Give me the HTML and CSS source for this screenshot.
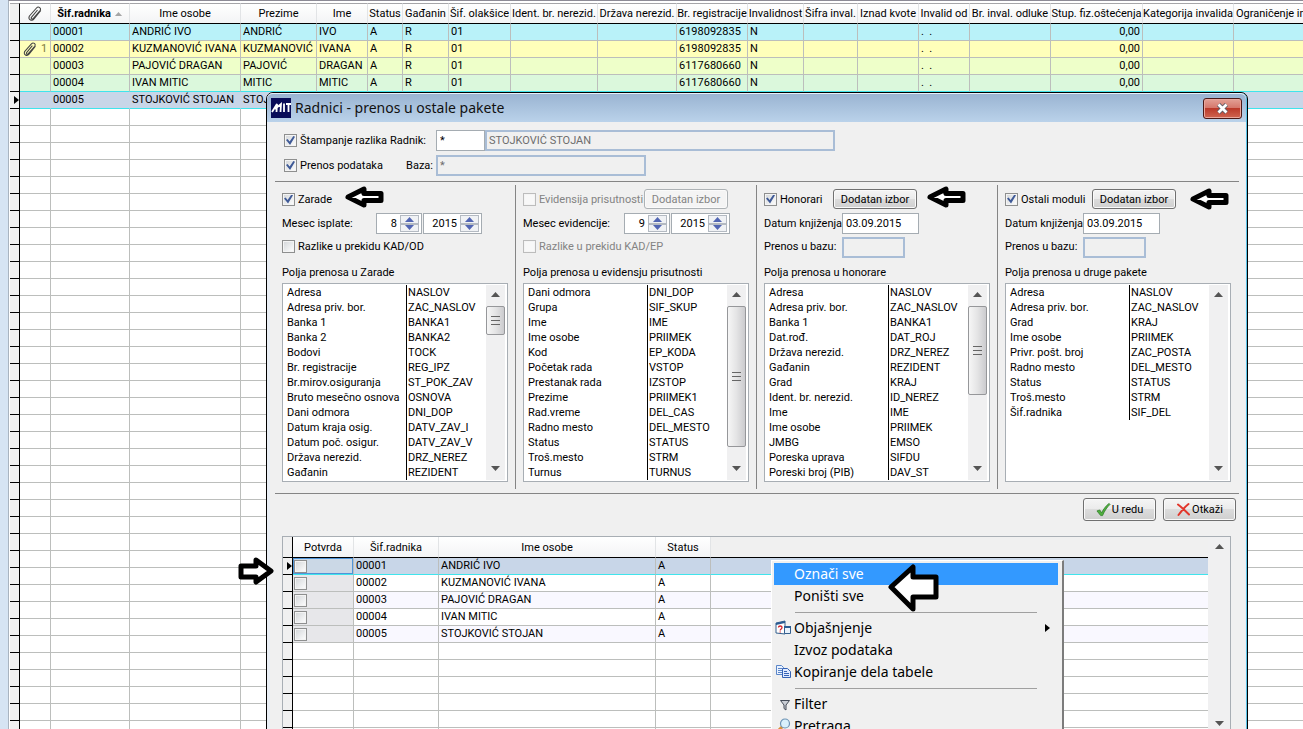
FILE: index.html
```html
<!DOCTYPE html>
<html lang="sr-Latn">
<head>
<meta charset="utf-8">
<title>Radnici - prenos u ostale pakete</title>
<link rel="stylesheet" href="styles.css">
</head>
<body>
<svg class="defs" aria-hidden="true">
  <symbol id="clip" viewBox="0 0 16 17"><path d="M2 11.500L9.500 3c2-2.200 5.300.2 3.500 2.600L6.200 13.500c-1 1.200-2.700 0-1.800-1.200L10.500 5M13.800 5.500L7 14c-2.200 2.700-6.500.5-4.600-2.800" fill="none" stroke="#444" stroke-width="1.100"/></symbol>
  <symbol id="up" viewBox="0 0 9 5"><path d="M0 5L4.500 0 9 5z" fill="#555"/></symbol>
  <symbol id="down" viewBox="0 0 9 5"><path d="M0 0h9L4.500 5z" fill="#555"/></symbol>
  <symbol id="arrow" viewBox="0 0 40 24"><path d="M4 12L20 4v4.500h17v7H20V20z" fill="#fff" stroke="#000" stroke-width="5" stroke-linejoin="round"/></symbol>
  <symbol id="pointer" viewBox="0 0 5 8"><path d="M0 0l5 4-5 4z" fill="#000"/></symbol>
</svg>

<main class="main-window">
  <table class="grid staff">
    <colgroup>
      <col class="c-gut"><col class="c-clip"><col class="c-id"><col class="c-name"><col class="c-last"><col class="c-first"><col class="c-status"><col class="c-cit"><col class="c-relief"><col class="c-ident"><col class="c-country"><col class="c-reg"><col class="c-inv"><col class="c-invcode"><col class="c-over"><col class="c-from"><col class="c-dec"><col class="c-deg"><col class="c-cat"><col>
    </colgroup>
    <thead><tr>
      <th class="gutter"></th><th><svg class="clip"><use href="#clip"/></svg></th><th class="sorted">Šif.radnika <svg class="sort"><use href="#up"/></svg></th><th>Ime osobe</th><th>Prezime</th><th>Ime</th><th>Status</th><th>Gađanin</th><th>Šif. olakšice</th><th>Ident. br. nerezid.</th><th>Država nerezid.</th><th>Br. registracije</th><th>Invalidnost</th><th>Šifra inval.</th><th>Iznad kvote</th><th>Invalid od</th><th>Br. inval. odluke</th><th>Stup. fiz.oštećenja</th><th>Kategorija invalida</th><th class="open">Ograničenje in</th>
    </tr></thead>
    <tbody>
      <tr class="cyan"><td class="gutter"></td><td></td><td>00001</td><td>ANDRIĆ IVO</td><td>ANDRIĆ</td><td>IVO</td><td>A</td><td>R</td><td>01</td><td></td><td></td><td>6198092835</td><td>N</td><td></td><td></td><td>. &nbsp;.</td><td></td><td class="num">0,00</td><td></td><td></td></tr>
      <tr class="yellow"><td class="gutter"></td><td class="attach"><div><svg class="clip"><use href="#clip"/></svg>1</div></td><td>00002</td><td>KUZMANOVIĆ IVANA</td><td>KUZMANOVIĆ</td><td>IVANA</td><td>A</td><td>R</td><td>01</td><td></td><td></td><td>6198092835</td><td>N</td><td></td><td></td><td>. &nbsp;.</td><td></td><td class="num">0,00</td><td></td><td></td></tr>
      <tr class="lime"><td class="gutter"></td><td></td><td>00003</td><td>PAJOVIĆ DRAGAN</td><td>PAJOVIĆ</td><td>DRAGAN</td><td>A</td><td>R</td><td>01</td><td></td><td></td><td>6117680660</td><td>N</td><td></td><td></td><td>. &nbsp;.</td><td></td><td class="num">0,00</td><td></td><td></td></tr>
      <tr class="green before-current"><td class="gutter"></td><td></td><td>00004</td><td>IVAN MITIC</td><td>MITIC</td><td>MITIC</td><td>A</td><td>R</td><td>01</td><td></td><td></td><td>6117680660</td><td>N</td><td></td><td></td><td>. &nbsp;.</td><td></td><td class="num">0,00</td><td></td><td></td></tr>
      <tr class="current"><td class="gutter"><svg class="pointer"><use href="#pointer"/></svg></td><td></td><td>00005</td><td>STOJKOVIĆ STOJAN</td><td>STOJ</td><td></td><td></td><td></td><td></td><td></td><td></td><td></td><td></td><td></td><td></td><td></td><td></td><td></td><td></td><td></td></tr>
      <tr class="blank"><td class="gutter"></td><td></td><td></td><td></td><td></td><td></td><td></td><td></td><td></td><td></td><td></td><td></td><td></td><td></td><td></td><td></td><td></td><td></td><td></td><td></td></tr>
    </tbody>
  </table>
</main>

<section class="dialog" role="dialog" aria-labelledby="dlg-title">
  <header class="titlebar">
    <svg class="logo" viewBox="0 0 20 20"><path d="M0 0h20v20H0z" fill="#090c58"/><path d="M1 14L6 6l-.5 8M4 11l6-5-.5 8M13 5.500v8.500M15 6h5M17.500 6v8" fill="none" stroke="#fff" stroke-width="1.800"/></svg>
    <h1 id="dlg-title">Radnici - prenos u ostale pakete</h1>
    <button class="close" aria-label="Zatvori"><svg viewBox="0 0 13 11"><path d="M2.500 1.500l8 8M10.500 1.500l-8 8" stroke="#5b5b66" stroke-width="4.500"/><path d="M2.500 1.500l8 8M10.500 1.500l-8 8" stroke="#fff" stroke-width="2.800"/></svg></button>
  </header>
  <div class="client">
    <div class="top-form">
      <label class="check"><input type="checkbox" checked>Štampanje razlika</label>
      <label for="radnik">Radnik:</label>
      <input id="radnik" class="field" value="*">
      <input class="field readonly" value="STOJKOVIĆ STOJAN" aria-label="Ime radnika" readonly>
      <label class="check"><input type="checkbox" checked>Prenos podataka</label>
      <label for="baza" class="end">Baza:</label>
      <input id="baza" class="field readonly base" value="*" readonly>
    </div>

    <div class="modules">
      <section class="module">
        <div class="row first"><label class="check"><input type="checkbox" checked>Zarade</label></div>
        <div class="row second">
          <label class="w-pay" for="m1">Mesec isplate:</label>
          <span class="spin"><input id="m1" value="8"><span class="steps"><button aria-label="Više"><svg><use href="#up"/></svg></button><button aria-label="Manje"><svg><use href="#down"/></svg></button></span></span>
          <span class="spin year"><input value="2015" aria-label="Godina isplate"><span class="steps"><button aria-label="Više"><svg><use href="#up"/></svg></button><button aria-label="Manje"><svg><use href="#down"/></svg></button></span></span>
        </div>
        <div class="row third"><label class="check"><input type="checkbox">Razlike u prekidu KAD/OD</label></div>
        <h2>Polja prenosa u Zarade</h2>
        <div class="listbox">
          <div class="rows"><table>
            <tr><td>Adresa</td><td>NASLOV</td></tr><tr><td>Adresa priv. bor.</td><td>ZAC_NASLOV</td></tr><tr><td>Banka 1</td><td>BANKA1</td></tr><tr><td>Banka 2</td><td>BANKA2</td></tr><tr><td>Bodovi</td><td>TOCK</td></tr><tr><td>Br. registracije</td><td>REG_IPZ</td></tr><tr><td>Br.mirov.osiguranja</td><td>ST_POK_ZAV</td></tr><tr><td>Bruto mesečno osnova</td><td>OSNOVA</td></tr><tr><td>Dani odmora</td><td>DNI_DOP</td></tr><tr><td>Datum kraja osig.</td><td>DATV_ZAV_I</td></tr><tr><td>Datum poč. osigur.</td><td>DATV_ZAV_V</td></tr><tr><td>Država nerezid.</td><td>DRZ_NEREZ</td></tr><tr><td>Gađanin</td><td>REZIDENT</td></tr>
          </table></div>
          <div class="scroll"><svg><use href="#up"/></svg><span class="thumb short"></span><svg class="last"><use href="#down"/></svg></div>
        </div>
      </section>

      <section class="module">
        <div class="row first"><label class="check off w-att"><input type="checkbox" disabled>Evidensija prisutnosti</label><button class="btn" disabled>Dodatan izbor</button></div>
        <div class="row second">
          <label class="w-evid" for="m2">Mesec evidencije:</label>
          <span class="spin"><input id="m2" value="9"><span class="steps"><button aria-label="Više"><svg><use href="#up"/></svg></button><button aria-label="Manje"><svg><use href="#down"/></svg></button></span></span>
          <span class="spin year"><input value="2015" aria-label="Godina evidencije"><span class="steps"><button aria-label="Više"><svg><use href="#up"/></svg></button><button aria-label="Manje"><svg><use href="#down"/></svg></button></span></span>
        </div>
        <div class="row third"><label class="check off"><input type="checkbox" disabled>Razlike u prekidu KAD/EP</label></div>
        <h2>Polja prenosa u evidensju prisutnosti</h2>
        <div class="listbox">
          <div class="rows"><table>
            <tr><td>Dani odmora</td><td>DNI_DOP</td></tr><tr><td>Grupa</td><td>SIF_SKUP</td></tr><tr><td>Ime</td><td>IME</td></tr><tr><td>Ime osobe</td><td>PRIIMEK</td></tr><tr><td>Kod</td><td>EP_KODA</td></tr><tr><td>Početak rada</td><td>VSTOP</td></tr><tr><td>Prestanak rada</td><td>IZSTOP</td></tr><tr><td>Prezime</td><td>PRIIMEK1</td></tr><tr><td>Rad.vreme</td><td>DEL_CAS</td></tr><tr><td>Radno mesto</td><td>DEL_MESTO</td></tr><tr><td>Status</td><td>STATUS</td></tr><tr><td>Troš.mesto</td><td>STRM</td></tr><tr><td>Turnus</td><td>TURNUS</td></tr>
          </table></div>
          <div class="scroll"><svg><use href="#up"/></svg><span class="thumb long"></span><svg class="last"><use href="#down"/></svg></div>
        </div>
      </section>

      <section class="module">
        <div class="row first"><label class="check w-fee"><input type="checkbox" checked>Honorari</label><button class="btn">Dodatan izbor</button></div>
        <div class="row second"><label class="w-date" for="d3">Datum knjiženja:</label><input id="d3" class="field date" value="03.09.2015"></div>
        <div class="row third"><label class="w-date" for="b3">Prenos u bazu:</label><input id="b3" class="field readonly db" readonly></div>
        <h2>Polja prenosa u honorare</h2>
        <div class="listbox">
          <div class="rows"><table>
            <tr><td>Adresa</td><td>NASLOV</td></tr><tr><td>Adresa priv. bor.</td><td>ZAC_NASLOV</td></tr><tr><td>Banka 1</td><td>BANKA1</td></tr><tr><td>Dat.rođ.</td><td>DAT_ROJ</td></tr><tr><td>Država nerezid.</td><td>DRZ_NEREZ</td></tr><tr><td>Gađanin</td><td>REZIDENT</td></tr><tr><td>Grad</td><td>KRAJ</td></tr><tr><td>Ident. br. nerezid.</td><td>ID_NEREZ</td></tr><tr><td>Ime</td><td>IME</td></tr><tr><td>Ime osobe</td><td>PRIIMEK</td></tr><tr><td>JMBG</td><td>EMSO</td></tr><tr><td>Poreska uprava</td><td>SIFDU</td></tr><tr><td>Poreski broj (PIB)</td><td>DAV_ST</td></tr>
          </table></div>
          <div class="scroll"><svg><use href="#up"/></svg><span class="thumb mid"></span><svg class="last"><use href="#down"/></svg></div>
        </div>
      </section>

      <section class="module">
        <div class="row first"><label class="check w-other"><input type="checkbox" checked>Ostali moduli</label><button class="btn">Dodatan izbor</button></div>
        <div class="row second"><label class="w-date" for="d4">Datum knjiženja:</label><input id="d4" class="field date" value="03.09.2015"></div>
        <div class="row third"><label class="w-date" for="b4">Prenos u bazu:</label><input id="b4" class="field readonly db" readonly></div>
        <h2>Polja prenosa u druge pakete</h2>
        <div class="listbox">
          <div class="rows"><table>
            <tr><td>Adresa</td><td>NASLOV</td></tr><tr><td>Adresa priv. bor.</td><td>ZAC_NASLOV</td></tr><tr><td>Grad</td><td>KRAJ</td></tr><tr><td>Ime osobe</td><td>PRIIMEK</td></tr><tr><td>Privr. pošt. broj</td><td>ZAC_POSTA</td></tr><tr><td>Radno mesto</td><td>DEL_MESTO</td></tr><tr><td>Status</td><td>STATUS</td></tr><tr><td>Troš.mesto</td><td>STRM</td></tr><tr><td>Šif.radnika</td><td>SIF_DEL</td></tr>
          </table></div>
          <div class="scroll"><svg><use href="#up"/></svg><svg class="last"><use href="#down"/></svg></div>
        </div>
      </section>
    </div>

    <div class="actions">
      <button class="btn big"><svg viewBox="0 0 16 15"><path d="M1 9l3-1 2 3C8 7 11 3 14 1l1 1c-3 3-6 7-8 12H5z" fill="#4fae3c" stroke="#2f7d2a" stroke-width=".8"/></svg>U redu</button>
      <button class="btn big"><svg viewBox="0 0 14 15"><path d="M1.500 2.500c4 3 7 6 11 10M12 2c-4 3-7 7-10 11" fill="none" stroke="#e2362b" stroke-width="2" stroke-linecap="round"/></svg>Otkaži</button>
    </div>

    <div class="picker">
      <table class="grid people">
        <colgroup><col class="c-gut"><col class="p-ok"><col class="p-id"><col class="p-name"><col class="p-status"><col></colgroup>
        <thead><tr><th class="gutter"></th><th>Potvrda</th><th>Šif.radnika</th><th>Ime osobe</th><th>Status</th><th class="none"></th></tr></thead>
        <tbody>
          <tr class="current"><td class="gutter"><svg class="pointer"><use href="#pointer"/></svg></td><td class="tick focus"><input type="checkbox" aria-label="Potvrda 00001"></td><td>00001</td><td>ANDRIĆ IVO</td><td>A</td><td></td></tr>
          <tr><td class="gutter"></td><td class="tick"><input type="checkbox" aria-label="Potvrda 00002"></td><td>00002</td><td>KUZMANOVIĆ IVANA</td><td>A</td><td></td></tr>
          <tr class="alt"><td class="gutter"></td><td class="tick"><input type="checkbox" aria-label="Potvrda 00003"></td><td>00003</td><td>PAJOVIĆ DRAGAN</td><td>A</td><td></td></tr>
          <tr><td class="gutter"></td><td class="tick"><input type="checkbox" aria-label="Potvrda 00004"></td><td>00004</td><td>IVAN MITIC</td><td>A</td><td></td></tr>
          <tr class="alt"><td class="gutter"></td><td class="tick"><input type="checkbox" aria-label="Potvrda 00005"></td><td>00005</td><td>STOJKOVIĆ STOJAN</td><td>A</td><td></td></tr>
          <tr class="blank"><td class="gutter"></td><td></td><td></td><td></td><td></td><td></td></tr>
        </tbody>
      </table>
      <div class="scroll"><svg><use href="#up"/></svg><svg class="last"><use href="#down"/></svg></div>
    </div>
  </div>
</section>

<div class="menu" role="menu">
  <button role="menuitem" class="hot"><span></span>Označi sve</button>
  <button role="menuitem"><span></span>Poništi sve</button>
  <hr>
  <button role="menuitem"><span><svg viewBox="0 0 16 16"><path d="M1 3l9-2v13l-9-1z" fill="#fff" stroke="#35608f"/><path d="M1 3l9-2v2L1 5z" fill="#2b5c92"/><path d="M3.500 7.500c0-2 3.500-2 3.500 0 0 1.500-1.800 1.300-1.800 3M5.200 11.500v1" fill="none" stroke="#d2232a" stroke-width="1.300"/><path d="M9.500 6.500h6v7h-6z" fill="#e9f2fb" stroke="#35608f"/><path d="M9 6h7v2H9z" fill="#2b5c92"/></svg></span>Objašnjenje<svg class="pointer more"><use href="#pointer"/></svg></button>
  <button role="menuitem"><span></span>Izvoz podataka</button>
  <button role="menuitem"><span><svg viewBox="0 0 16 16"><path d="M1.500 1.500h5l2 2v7h-7z" fill="#eaf2ff" stroke="#5b86c8"/><path d="M3 4.500h4M3 6.500h4M3 8.500h4" stroke="#5b86c8"/><path d="M7.500 4.500h5l3 3v6h-8z" fill="#dfeaff" stroke="#3562b5"/><path d="M9 7.500h3M9 9.500h5M9 11.500h5" stroke="#3562b5"/></svg></span>Kopiranje dela tabele</button>
  <hr>
  <button role="menuitem"><span><svg viewBox="0 0 16 16"><path d="M5.500 4.500h9L11 9v5l-2-1.500V9z" fill="#c9cdd4" stroke="#444b57"/></svg></span>Filter</button>
  <button role="menuitem"><span><svg viewBox="0 0 16 16"><path d="M3 13l4-4" stroke="#d9913b" stroke-width="3" stroke-linecap="round"/><circle cx="10" cy="5.500" r="4.500" fill="#d9f0fb" stroke="#6d93b5" stroke-width="1.200"/></svg></span>Pretraga</button>
</div>

<svg class="mark m-a"><use href="#arrow"/></svg>
<svg class="mark m-b"><use href="#arrow"/></svg>
<svg class="mark m-c"><use href="#arrow"/></svg>
<svg class="mark m-d" viewBox="0 0 37 30"><path d="M3 10h15V4l15 11-15 11v-5H3z" fill="#fff" stroke="#000" stroke-width="5" stroke-linejoin="round"/></svg>
<svg class="mark m-e" viewBox="0 0 52 48"><path d="M4 23L26 3v10h23v20H26v12z" fill="#fff" stroke="#000" stroke-width="5" stroke-linejoin="round"/></svg>
</body>
</html>
```

FILE: styles.css
```css
* { box-sizing: border-box; }
html, body { height: 100%; }
body {
  margin: 0;
  position: relative;
  overflow: hidden;
  background: #d6e4f3;
  color: #000;
  font: 11px/15px Roboto, "Liberation Sans", Arial, sans-serif;
}
button, input { font: inherit; color: inherit; margin: 0; }
.defs { position: absolute; width: 0; height: 0; }

/* main grid */
.main-window {
  height: 100%;
  margin-left: 8px;
  padding: 2px 0 0 1px;
  overflow: hidden;
  background: #fff;
  border-left: 1px solid #a9b4c0;
  border-top: 1px solid #8d8b96;
}
.grid {
  width: 100%;
  table-layout: fixed;
  border-collapse: separate;
  border-spacing: 0;
  background: #fff;
}
.grid th, .grid td { padding: 0; white-space: nowrap; overflow: hidden; }
.grid th {
  height: 21px;
  font-weight: normal;
  text-align: center;
  background: linear-gradient(#fff, #f3f4f5);
  border-right: 1px solid #e2e4e6;
  border-bottom: 1px solid #000;
}
.staff th { border-top: 1px solid #a5a5a8; }
.grid th.open { text-align: left; padding-left: 2px; border-right: 0; }
.grid th.sorted { font-weight: bold; }
.grid th.none { background: #f0f0f0; border-right: 0; }
.grid td {
  height: 17px;
  line-height: 16px;
  padding-left: 2px;
  border-right: 1px solid #bcbebc;
  border-bottom: 1px solid #bcbebc;
}
.grid .gutter {
  padding: 0;
  background: #f0f0f0;
  border-right: 1px solid #000;
  border-bottom: 1px solid #000;
  text-align: right;
}
.grid td.num { text-align: right; padding-right: 2px; }
.grid td:last-child { border-right: 0; }
.cyan td { background: #b9f2f9; }
.yellow td { background: #ffffba; }
.lime td { background: #eeffc9; }
.green td { background: #dbf8dc; }
.before-current td { border-bottom-color: #40e4ec; }
.grid .current td { background: #c8d6e8; border-bottom-color: #40e4ec; }
.staff .current td { border-right-color: #c8d6e8; }
.grid .current td.gutter { background: #f0f0f0; border-color: #000; line-height: 0; }
.blank td {
  border-bottom: 0;
  background: repeating-linear-gradient(#fff 0 16px, #bcbebc 16px 17px);
}
.grid .blank td.gutter {
  border-bottom: 0;
  background: repeating-linear-gradient(#f0f0f0 0 16px, #000 16px 17px);
}
.staff .blank td { height: 680px; }
.people .blank td { height: 102px; }
.attach div { display: flex; align-items: center; gap: 3px; height: 16px; color: #7d7b3a; }
.clip { width: 16px; height: 17px; vertical-align: middle; }
.attach .clip { height: 16px; }
.sort { width: 9px; height: 4px; vertical-align: middle; opacity: .5; }
.pointer { width: 5px; height: 8px; vertical-align: middle; }

.c-gut { width: 10px; }
.c-clip { width: 31px; }
.c-id, .c-country { width: 79px; }
.c-name { width: 111px; }
.c-last { width: 76px; }
.c-first, .c-from { width: 51px; }
.c-status { width: 35px; }
.c-cit { width: 46px; }
.c-relief { width: 62px; }
.c-ident { width: 87px; }
.c-reg { width: 71px; }
.c-inv { width: 56px; }
.c-invcode { width: 54px; }
.c-over { width: 61px; }
.c-dec { width: 81px; }
.c-deg { width: 92px; }
.c-cat { width: 91px; }

/* dialog window */
.dialog {
  position: absolute;
  left: 266px;
  right: 55px;
  top: 92px;
  padding: 0 2px 0 3px;
  background: #e9eef4;
  border: 1px solid #000;
  border-radius: 7px 7px 0 0;
  box-shadow: inset -1px 0 #59c3e6, inset 0 1px #eaf3fb;
}
.titlebar {
  display: flex;
  align-items: center;
  gap: 4px;
  height: 29px;
  margin: 0 -1px 0 -3px;
  padding: 0 4px;
  border-top: 1px solid #e6f0fa;
  border-radius: 6px 6px 0 0;
  background: linear-gradient(#9ab4d2, #bad2ea);
}
.logo { width: 20px; height: 20px; }
.titlebar h1 { flex: 1; margin: 0; font: 14px/20px "Noto Sans", "Open Sans", sans-serif; color: #111; }
.close {
  width: 39px;
  height: 21px;
  padding: 0;
  border: 1px solid #4c1a17;
  border-radius: 3px;
  box-shadow: inset 0 0 0 1px #eaa79c;
  background: linear-gradient(#e3a196 0, #d5766a 48%, #bb3a2a 50%, #cf6551);
}
.close svg { width: 13px; height: 11px; display: block; margin: 0 auto; }
.client { padding: 8px 6px 4px 5px; background: #f0f0f0; }

.top-form {
  display: grid;
  grid-template-columns: 106px 46px 49px 350px;
  row-gap: 4px;
  align-items: center;
  padding: 0 0 5px 9px;
}
.end { text-align: right; padding-right: 3px; }
.base { grid-column: 3 / 5; width: 210px; }
.field {
  height: 21px;
  min-width: 0;
  padding: 0 3px;
  background: #fff;
  border: 1px solid #a5acb2;
  border-radius: 0;
}
.field.readonly { background: #f0f0f0; border: 2px solid #a9bdd6; color: #6d6d6d; padding: 0 2px; }
.field.date { width: 77px; }
.field.db { width: 63px; }

.check { display: flex; align-items: center; gap: 3px; white-space: nowrap; }
.check.off { color: #838383; }
input[type=checkbox] {
  appearance: none;
  flex: none;
  width: 13px;
  height: 13px;
  border: 1px solid #8e8f8f;
  background: linear-gradient(135deg, #d2d5d8, #fff);
  box-shadow: inset 0 0 0 1px #f4f4f4;
}
input[type=checkbox]:disabled { border-color: #bcbcbc; background: #f8f8f8; }
.check input:checked::before {
  content: "";
  display: block;
  width: 9px;
  height: 9px;
  margin: 1px;
  background: #3f5a97;
  clip-path: polygon(0 45%, 18% 32%, 40% 62%, 82% 0, 100% 8%, 45% 100%);
}

.modules {
  display: grid;
  grid-template-columns: repeat(4, 1fr);
  padding: 3px 0 4px;
  border-top: 1px solid #858585;
  border-bottom: 1px solid #858585;
}
.module { padding: 0 7px 7px; border-right: 1px solid #858585; }
.module:last-child { border-right: 0; padding-right: 8px; }
.row { display: flex; align-items: center; }
.row.first { height: 28px; }
.row.second { height: 21px; }
.row.third { height: 24px; }
.row label { white-space: nowrap; }
.row.third .field { align-self: flex-end; }
.w-pay { width: 94px; }
.w-evid { width: 101px; }
.w-date { width: 78px; }
.w-att { width: 121px; }
.w-fee { width: 69px; }
.w-other { width: 87px; }
.module h2 { margin: 0; padding: 7px 0 3px; font-size: 11px; font-weight: normal; line-height: 15px; }

.spin {
  display: flex;
  width: 46px;
  height: 21px;
  padding: 1px 2px 1px 0;
  margin-right: 1px;
  background: #fff;
  border: 1px solid #a5acb2;
}
.spin.year { width: 59px; }
.spin input { flex: 1; width: 20px; min-width: 0; border: 0; padding: 0 3px 0 0; background: none; text-align: right; }
.steps { display: flex; flex-direction: column; width: 19px; }
.steps button { flex: 1; display: flex; align-items: center; justify-content: center; padding: 0; border: 1px solid #b4bac2; background: #f0f2f5; }
.steps svg { width: 9px; height: 5px; filter: sepia(1) hue-rotate(190deg) saturate(3); }

.btn {
  width: 84px;
  height: 20px;
  padding: 0;
  border: 1px solid #707070;
  border-radius: 3px;
  background: linear-gradient(#f5f5f5 0, #ebebeb 48%, #dcdcdc 50%, #cfcfcf);
  box-shadow: inset 0 0 0 1px #fafafa;
}
.btn:disabled { border-color: #adb2b5; background: #f4f4f4; color: #838383; }
.btn.big { display: flex; align-items: center; justify-content: center; gap: 1px; width: 73px; height: 23px; }
.btn svg { width: 15px; height: 15px; }
.actions { display: flex; justify-content: flex-end; gap: 7px; padding: 4px 3px 15px; }

.listbox {
  display: flex;
  height: 199px;
  padding: 1px 2px 1px 1px;
  background: #fff;
  border: 1px solid #a8aeb4;
}
.rows { flex: 1; overflow: hidden; }
.rows table { width: 100%; table-layout: fixed; border-collapse: separate; border-spacing: 0; }
.rows td { height: 15px; padding: 0 0 0 1px; line-height: 15px; white-space: nowrap; }
.rows td:first-child { width: 123px; padding-left: 3px; border-right: 1px solid #000; }
.scroll {
  display: flex;
  flex-direction: column;
  align-items: center;
  width: 19px;
  padding: 7px 0 9px;
  background: #f0f0f1;
}
.scroll svg { flex: none; width: 9px; height: 5px; }
.scroll .last { margin-top: auto; }
.thumb {
  width: 19px;
  margin-top: 9px;
  border: 1px solid #96979a;
  border-radius: 2px;
  background:
    repeating-linear-gradient(#666 0 1px, transparent 1px 4px) center / 9px 9px no-repeat,
    linear-gradient(90deg, #f6f6f6, #e4e4e5 50%, #cbcbce);
}
.thumb.short { height: 29px; }
.thumb.long { height: 141px; }
.thumb.mid { height: 89px; }

.picker {
  display: flex;
  margin: 0 8px 0 7px;
  height: 202px;
  overflow: hidden;
  border: 1px solid #a8aeb4;
}
.picker .grid { flex: 1; width: auto; min-width: 0; height: 0; }
.picker .scroll { width: 22px; height: 198px; }
.p-ok { width: 61px; }
.p-id { width: 85px; }
.p-name { width: 217px; }
.p-status { width: 55px; }
.alt td { background: #f9f8ff; }
.grid td.tick { padding-left: 1px; line-height: 0; background: #e7e7ea; }
.grid .current td.tick.focus { background: #cbd8e6; box-shadow: inset 0 0 0 1px #4f94d8; }
.tick input { vertical-align: middle; }

/* context menu */
.menu {
  position: absolute;
  left: 771px;
  top: 560px;
  width: 293px;
  padding: 2px 4px 4px 2px;
  background: #f0f0f0;
  border: 1px solid #fff;
  border-right: 2px solid #7c7c7c;
}
.menu button {
  display: flex;
  align-items: center;
  width: 100%;
  height: 22px;
  padding: 0;
  border: 0;
  background: none;
  text-align: left;
  font: 14px/22px "Noto Sans", "Open Sans", sans-serif;
}
.menu button.hot { background: #3399ff; color: #fff; }
.menu span { width: 20px; height: 16px; }
.menu span svg { display: block; width: 16px; height: 16px; margin-left: 1px; }
.menu .more { margin: 0 8px 0 auto; }
.menu hr { margin: 5px 21px 4px; border: 0; border-top: 1px solid #a0a0a0; }

/* pointing arrows drawn over the screen */
.mark { position: absolute; width: 40px; height: 24px; pointer-events: none; }
.m-a { left: 344px; top: 185px; }
.m-b { left: 926px; top: 185px; }
.m-c { left: 1189px; top: 187px; }
.m-d { left: 238px; top: 556px; width: 37px; height: 30px; }
.m-e { left: 887px; top: 564px; width: 52px; height: 48px; }
```
